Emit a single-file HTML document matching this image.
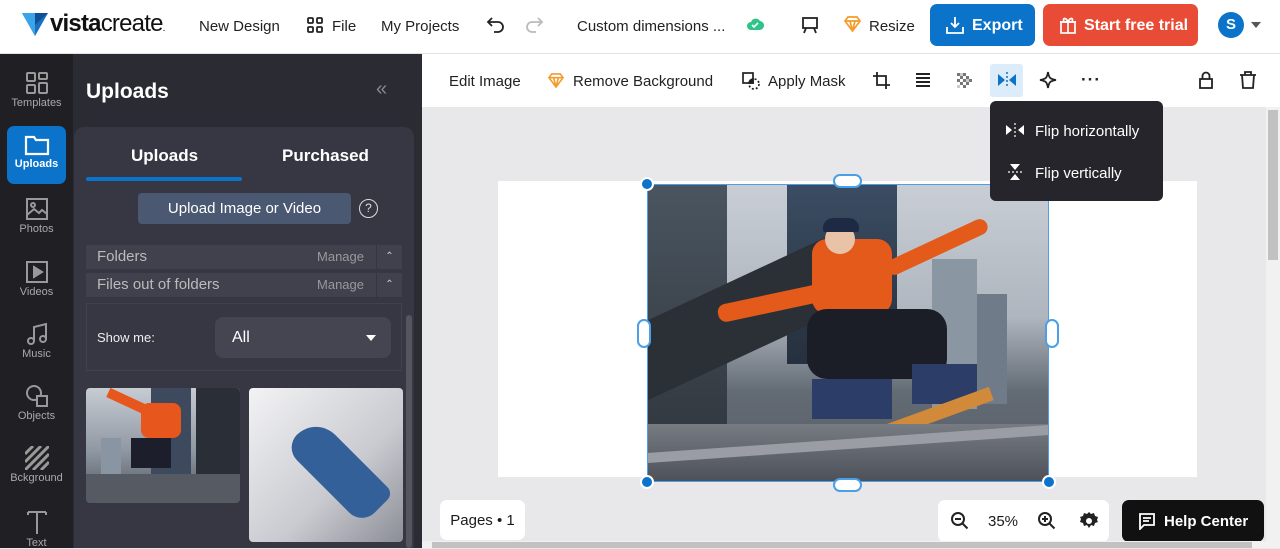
<!DOCTYPE html>
<html><head><meta charset="utf-8"><style>
*{box-sizing:border-box;margin:0;padding:0}
body{width:1280px;height:548px;overflow:hidden;font-family:"Liberation Sans",sans-serif;background:#e8e8ea;position:relative;color:#1a1a1a}
.abs{position:absolute}
.top{left:0;top:0;width:1280px;height:54px;background:#fff;border-bottom:1px solid #e2e2e2}
.t{position:absolute;font-size:15px;top:17px;color:#222}
.side{left:0;top:54px;width:73px;height:494px;background:#1f1f24}
.si{position:absolute;left:0;width:73px;text-align:center;color:#aaa;font-size:11px}
.si svg{display:block;margin:0 auto 2px}
.panel{left:73px;top:54px;width:349px;height:494px;background:#2b2b33}
.card{left:74px;top:127px;width:340px;height:421px;background:#373743;border-radius:10px 10px 0 0}
.tb{left:422px;top:54px;width:858px;height:53px;background:#fff}
.tbt{position:absolute;top:73px;font-size:15px;color:#222}
.row{position:absolute;left:86px;width:316px;height:24px;background:#41414d;color:#bbb;font-size:15px;line-height:24px;padding-left:11px}
.row .m{position:absolute;right:38px;top:0;font-size:13px;color:#999}
.row .c{position:absolute;right:0;top:0;width:26px;height:24px;border-left:1px solid #353540;color:#ccc;font-size:10px;text-align:center}
</style></head><body>
<div class="abs top"></div>
<svg class="abs" style="left:22px;top:13px" width="26" height="23" viewBox="0 0 26 23"><path d="M0 0h26L13 23z" fill="#1b6fc0"/><path d="M0 0h13v23z" fill="#3aa4e8"/><path d="M13 0h13L13 12z" fill="#0f4f96"/></svg>
<div class="abs" style="left:50px;top:10px;font-size:24px;letter-spacing:-0.8px;color:#111"><b>vista</b>create<span style="font-size:10px">.</span></div>
<div class="t" style="left:199px;top:18px">New Design</div>
<svg class="abs" style="left:307px;top:17px" width="16" height="16" viewBox="0 0 16 16" fill="none" stroke="#222" stroke-width="1.8"><rect x="1" y="1" width="5" height="5" rx="1"/><rect x="10" y="1" width="5" height="5" rx="1"/><rect x="1" y="10" width="5" height="5" rx="1"/><rect x="10" y="10" width="5" height="5" rx="1"/></svg>
<div class="t" style="left:332px;top:18px">File</div>
<div class="t" style="left:381px;top:18px">My Projects</div>
<svg class="abs" style="left:486px;top:16px" width="20" height="18" viewBox="0 0 20 18" fill="none" stroke="#222" stroke-width="1.8"><path d="M6 2L2 6l4 4M2 6h10a5 5 0 010 10H8"/></svg>
<svg class="abs" style="left:524px;top:16px" width="20" height="18" viewBox="0 0 20 18" fill="none" stroke="#bbb" stroke-width="1.8"><path d="M14 2l4 4-4 4M18 6H8a5 5 0 000 10h4"/></svg>
<div class="t" style="left:577px;top:18px">Custom dimensions ...</div>
<svg class="abs" style="left:746px;top:17px" width="18" height="14" viewBox="0 0 18 14"><path d="M5 13a4 4 0 010-8 5 5 0 019-1 4 4 0 01-1 9z" fill="#2ec48c"/><path d="M6 8l2 2 4-4" stroke="#fff" stroke-width="1.6" fill="none"/></svg>
<svg class="abs" style="left:801px;top:16px" width="18" height="18" viewBox="0 0 18 18" fill="none" stroke="#222" stroke-width="1.8"><rect x="2" y="2" width="14" height="10"/><path d="M5 12l-2 5M13 12l2 5"/></svg>
<svg class="abs" style="left:844px;top:16px" width="17" height="16" viewBox="0 0 17 16" fill="none" stroke="#f39c2a" stroke-width="1.7"><path d="M4 1h9l3 4-7.5 10L1 5z M1 5h15 M6 5l2.5 10L11 5"/></svg>
<div class="t" style="left:869px;top:18px">Resize</div>
<div class="abs" style="left:930px;top:4px;width:105px;height:42px;background:#0b73c9;border-radius:7px;color:#fff;font-size:16px;font-weight:bold;line-height:43px;padding-left:42px">Export</div>
<svg class="abs" style="left:946px;top:16px" width="18" height="18" viewBox="0 0 18 18" fill="none" stroke="#fff" stroke-width="1.8"><path d="M9 1v10M5 7l4 4 4-4M1 11v6h16v-6"/></svg>
<div class="abs" style="left:1043px;top:4px;width:155px;height:42px;background:#e94c36;border-radius:7px;color:#fff;font-size:16px;font-weight:bold;line-height:43px;padding-left:41px">Start free trial</div>
<svg class="abs" style="left:1059px;top:16px" width="18" height="18" viewBox="0 0 18 18" fill="none" stroke="#fff" stroke-width="1.7"><rect x="2" y="6" width="14" height="11"/><path d="M1 6h16M9 6v11M9 6C7 1 3 2 5 5M9 6c2-5 6-4 4-1"/></svg>
<div class="abs" style="left:1218px;top:12px;width:26px;height:26px;border-radius:50%;background:#0b73c9;color:#fff;font-weight:bold;font-size:15px;text-align:center;line-height:26px">S</div>
<div class="abs" style="left:1251px;top:22px;border:5px solid transparent;border-top:6px solid #555"></div>

<div class="abs side"></div>
<div class="abs panel"></div>
<div class="si" style="top:71px"><svg width="24" height="24" viewBox="0 0 24 24" fill="none" stroke="#999" stroke-width="2"><rect x="2" y="2" width="8" height="8" rx="1"/><rect x="14" y="2" width="8" height="6" rx="1"/><rect x="2" y="14" width="8" height="8" rx="1"/><rect x="14" y="12" width="8" height="10" rx="1"/></svg>Templates</div>
<div class="abs" style="left:7px;top:126px;width:59px;height:58px;background:#0b73c9;border-radius:7px"></div>
<div class="si" style="top:134px;color:#fff;font-weight:bold"><svg width="26" height="22" viewBox="0 0 26 22" fill="none" stroke="#fff" stroke-width="2.2"><path d="M2 3h8l2 3h12v14H2z"/></svg>Uploads</div>
<div class="si" style="top:197px"><svg width="24" height="24" viewBox="0 0 24 24" fill="none" stroke="#999" stroke-width="2"><rect x="2" y="2" width="20" height="20"/><circle cx="8" cy="8" r="2"/><path d="M2 18l7-6 5 4 3-3 5 4"/></svg>Photos</div>
<div class="si" style="top:260px"><svg width="24" height="24" viewBox="0 0 24 24" fill="none" stroke="#999" stroke-width="2"><rect x="2" y="2" width="20" height="20"/><path d="M9 7v10l8-5z" fill="#999"/></svg>Videos</div>
<div class="si" style="top:322px"><svg width="24" height="24" viewBox="0 0 24 24" fill="none" stroke="#999" stroke-width="2"><circle cx="6" cy="19" r="3"/><circle cx="18" cy="17" r="3"/><path d="M9 19V5l12-3v15"/></svg>Music</div>
<div class="si" style="top:384px"><svg width="24" height="24" viewBox="0 0 24 24" fill="none" stroke="#999" stroke-width="2"><circle cx="9" cy="9" r="7"/><rect x="12" y="12" width="10" height="10" fill="#1f1f24"/></svg>Objects</div>
<div class="si" style="top:446px"><svg width="24" height="24" viewBox="0 0 24 24" stroke="#999" stroke-width="3"><path d="M0 8L8 0M0 16L16 0M0 24L24 0M8 24L24 8M16 24l8-8"/></svg>Bckground</div>
<div class="si" style="top:509px"><svg width="24" height="26" viewBox="0 0 24 26" fill="none" stroke="#999" stroke-width="2"><path d="M3 3h18M12 3v22M3 3v3M21 3v3"/></svg>Text</div>

<div class="abs" style="left:86px;top:80px;color:#fff;font-size:21px;font-weight:bold">Uploads</div>
<div class="abs" style="left:376px;top:78px;color:#888;font-size:20px">&laquo;</div>
<div class="abs card"></div>
<div class="abs" style="left:131px;top:146px;color:#fff;font-size:17px;font-weight:bold">Uploads</div>
<div class="abs" style="left:282px;top:146px;color:#fff;font-size:17px;font-weight:bold">Purchased</div>
<div class="abs" style="left:86px;top:177px;width:156px;height:4px;background:#0b73c9;border-radius:2px"></div>
<div class="abs" style="left:138px;top:193px;width:213px;height:31px;background:#4b5871;border-radius:4px;color:#fff;font-size:15px;text-align:center;line-height:31px">Upload Image or Video</div>
<div class="abs" style="left:359px;top:199px;width:19px;height:19px;border:1.5px solid #ddd;border-radius:50%;color:#ddd;font-size:12px;text-align:center;line-height:16px">?</div>
<div class="row" style="top:245px">Folders<span class="m">Manage</span><span class="c">&#8963;</span></div>
<div class="row" style="top:273px">Files out of folders<span class="m">Manage</span><span class="c">&#8963;</span></div>
<div class="abs" style="left:86px;top:303px;width:316px;height:68px;border:1px solid #42424e"></div>
<div class="abs" style="left:97px;top:330px;color:#eee;font-size:13px">Show me:</div>
<div class="abs" style="left:215px;top:317px;width:176px;height:41px;background:#454552;border-radius:8px;color:#fff;font-size:16px;line-height:41px;padding-left:17px">All</div>
<div class="abs" style="left:366px;top:335px;border:5px solid transparent;border-top:6px solid #fff"></div>
<div class="abs" style="left:406px;top:315px;width:6px;height:233px;background:#555560;border-radius:3px"></div>
<!-- thumbs -->
<div class="abs" style="left:86px;top:388px;width:154px;height:115px;border-radius:4px;overflow:hidden;background:linear-gradient(#c7ccd3,#8f97a2 55%,#4d535c)">
<div class="abs" style="left:65px;top:0;width:40px;height:90px;background:#3d4a5e"></div><div class="abs" style="left:110px;top:0;width:44px;height:115px;background:#2a2f37"></div><div class="abs" style="left:15px;top:50px;width:20px;height:50px;background:#8a95a4"></div><div class="abs" style="left:55px;top:15px;width:40px;height:35px;background:#e7561c;border-radius:8px"></div><div class="abs" style="left:20px;top:10px;width:50px;height:10px;background:#e7561c;transform:rotate(25deg)"></div><div class="abs" style="left:45px;top:50px;width:40px;height:30px;background:#1c1f2b"></div><div class="abs" style="left:0;top:86px;width:154px;height:29px;background:#565a63"></div></div>
<div class="abs" style="left:249px;top:388px;width:154px;height:154px;border-radius:4px;overflow:hidden;background:linear-gradient(135deg,#f3f3f5,#c9cad0 60%,#8c8e96)">
<div class="abs" style="left:35px;top:60px;width:110px;height:45px;background:#34609a;border-radius:30px 10px 20px 20px;transform:rotate(45deg)"></div></div>

<!-- toolbar -->
<div class="abs tb"></div>
<div class="tbt" style="left:449px">Edit Image</div>
<svg class="abs" style="left:548px;top:73px" width="16" height="15" viewBox="0 0 17 16" fill="none" stroke="#f39c2a" stroke-width="1.7"><path d="M4 1h9l3 4-7.5 10L1 5z M1 5h15 M6 5l2.5 10L11 5"/></svg>
<div class="tbt" style="left:573px">Remove Background</div>
<svg class="abs" style="left:742px;top:72px" width="18" height="18" viewBox="0 0 18 18" fill="none" stroke="#222" stroke-width="1.7"><rect x="1" y="1" width="10" height="10"/><circle cx="12" cy="12" r="5" stroke-dasharray="2 2"/><path d="M7 11a5 5 0 014-4v4z" fill="#222"/></svg>
<div class="tbt" style="left:768px">Apply Mask</div>
<svg class="abs" style="left:873px;top:72px" width="17" height="17" viewBox="0 0 17 17" fill="none" stroke="#222" stroke-width="1.8"><path d="M4 0v13h13M0 4h13v13"/></svg>
<svg class="abs" style="left:916px;top:72px" width="14" height="16" viewBox="0 0 14 16" stroke="#222" stroke-width="2"><path d="M0 2h14M0 6h14M0 10h14M0 14h14"/></svg>
<svg class="abs" style="left:957px;top:73px" width="15" height="15" viewBox="0 0 15 15"><path d="M0 0h3v3H0zM6 0h3v3H6zM3 3h3v3H3zM9 3h3v3H9zM0 6h3v3H0zM6 6h3v3H6zM12 6h3v3h-3zM3 9h3v3H3zM9 9h3v3H9zM6 12h3v3H6z" fill="#777"/><path d="M3 0h3v3H3zM9 6h3v3H9zM0 12h3v3H0z" fill="#ccc"/></svg>
<div class="abs" style="left:990px;top:64px;width:33px;height:33px;background:#dcecfa;border-radius:3px"></div>
<svg class="abs" style="left:997px;top:72px" width="20" height="16" viewBox="0 0 20 16"><path d="M1 2l7 6-7 6zM19 2l-7 6 7 6z" fill="#0b73c9"/><path d="M10 0v16" stroke="#0b73c9" stroke-width="1.5" stroke-dasharray="2 2"/></svg>
<svg class="abs" style="left:1039px;top:71px" width="18" height="18" viewBox="0 0 18 18" fill="none" stroke="#222" stroke-width="1.8"><path d="M9 1C10 7 11 8 17 9 11 10 10 11 9 17 8 11 7 10 1 9 7 8 8 7 9 1z"/></svg>
<div class="abs" style="left:1081px;top:70px;font-size:17px;font-weight:bold;color:#222;letter-spacing:1px">···</div>
<svg class="abs" style="left:1199px;top:71px" width="14" height="18" viewBox="0 0 14 18" fill="none" stroke="#222" stroke-width="1.8"><rect x="1" y="8" width="12" height="9"/><path d="M3.5 8V5a3.5 3.5 0 017 0v3"/></svg>
<svg class="abs" style="left:1240px;top:71px" width="16" height="18" viewBox="0 0 16 18" fill="none" stroke="#222" stroke-width="1.8"><path d="M0 4h16M5 4V1h6v3M2 4l1 13h10l1-13"/></svg>

<!-- page -->
<div class="abs" style="left:498px;top:181px;width:699px;height:296px;background:#fff"></div>
<div class="abs" style="left:647px;top:184px;width:402px;height:298px;overflow:hidden;background:linear-gradient(#c9ced5,#aeb5be 45%,#626a74 70%,#5a5f67)">
<div class="abs" style="left:0;top:0;width:80px;height:298px;background:linear-gradient(#4a5560,#2e3339)"></div>
<div class="abs" style="left:140px;top:0;width:110px;height:180px;background:linear-gradient(#3b4d63,#26303e)"></div>
<div class="abs" style="left:285px;top:75px;width:45px;height:150px;background:#8b96a3"></div>
<div class="abs" style="left:330px;top:110px;width:30px;height:110px;background:#707b89"></div>
<div class="abs" style="left:0;top:90px;width:200px;height:80px;background:#2b3036;transform:skewY(-25deg)"></div>
<div class="abs" style="left:165px;top:55px;width:80px;height:75px;background:#e45a1b;border-radius:15px"></div>
<div class="abs" style="left:70px;top:110px;width:110px;height:18px;background:#e45a1b;transform:rotate(-12deg);border-radius:8px"></div>
<div class="abs" style="left:235px;top:55px;width:110px;height:16px;background:#e45a1b;transform:rotate(-25deg);border-radius:8px"></div>
<div class="abs" style="left:178px;top:40px;width:30px;height:30px;background:#e8c3a8;border-radius:50%"></div>
<div class="abs" style="left:176px;top:34px;width:36px;height:14px;background:#1e2a44;border-radius:10px 10px 2px 2px"></div>
<div class="abs" style="left:160px;top:125px;width:140px;height:70px;background:#1b1e27;border-radius:20px"></div>
<div class="abs" style="left:165px;top:195px;width:80px;height:40px;background:#2c3d68"></div>
<div class="abs" style="left:265px;top:180px;width:65px;height:40px;background:#2c3d68"></div>
<div class="abs" style="left:160px;top:235px;width:190px;height:14px;background:#d08a3a;transform:rotate(-20deg)"></div>
<div class="abs" style="left:0;top:240px;width:402px;height:58px;background:linear-gradient(#777b82,#4c5058)"></div>
<div class="abs" style="left:0;top:255px;width:402px;height:10px;background:#9a9ea4;transform:rotate(-4deg)"></div>
</div>
<div class="abs" style="left:647px;top:184px;width:402px;height:298px;border:1.5px solid #4a9fe6"></div>
<div class="abs" style="left:640px;top:177px;width:14px;height:14px;border-radius:50%;background:#0b73c9;border:2px solid #fff"></div>
<div class="abs" style="left:1042px;top:475px;width:14px;height:14px;border-radius:50%;background:#0b73c9;border:2px solid #fff"></div>
<div class="abs" style="left:640px;top:475px;width:14px;height:14px;border-radius:50%;background:#0b73c9;border:2px solid #fff"></div>
<div class="abs" style="left:833px;top:174px;width:29px;height:14px;border-radius:7px;background:#fff;border:2px solid #4a9fe6"></div>
<div class="abs" style="left:833px;top:478px;width:29px;height:14px;border-radius:7px;background:#fff;border:2px solid #4a9fe6"></div>
<div class="abs" style="left:637px;top:319px;width:14px;height:29px;border-radius:7px;background:#fff;border:2px solid #4a9fe6"></div>
<div class="abs" style="left:1045px;top:319px;width:14px;height:29px;border-radius:7px;background:#fff;border:2px solid #4a9fe6"></div>

<!-- dropdown -->
<div class="abs" style="left:990px;top:101px;width:173px;height:100px;background:#25252b;border-radius:6px"></div>
<svg class="abs" style="left:1005px;top:123px" width="20" height="14" viewBox="0 0 20 14"><path d="M1 2l6 5-6 5zM19 2l-6 5 6 5z" fill="#fff"/><path d="M10 0v14" stroke="#fff" stroke-width="1.2" stroke-dasharray="2 2"/></svg>
<div class="abs" style="left:1035px;top:123px;color:#fff;font-size:15px">Flip horizontally</div>
<svg class="abs" style="left:1008px;top:163px" width="14" height="18" viewBox="0 0 14 18"><path d="M2 1l5 6 5-6zM2 17l5-6 5 6z" fill="#fff"/><path d="M0 9h14" stroke="#fff" stroke-width="1.2" stroke-dasharray="2 2"/></svg>
<div class="abs" style="left:1035px;top:165px;color:#fff;font-size:15px">Flip vertically</div>

<!-- bottom -->
<div class="abs" style="left:440px;top:500px;width:85px;height:40px;background:#fff;border-radius:7px;font-size:15px;line-height:41px;text-align:center">Pages • 1</div>
<div class="abs" style="left:938px;top:500px;width:171px;height:42px;background:#fff;border-radius:7px"></div>
<svg class="abs" style="left:950px;top:511px" width="20" height="20" viewBox="0 0 20 20" fill="none" stroke="#222" stroke-width="2"><circle cx="8" cy="8" r="6"/><path d="M5 8h6M12.5 12.5l5 5"/></svg>
<div class="abs" style="left:988px;top:513px;font-size:15px">35%</div>
<svg class="abs" style="left:1037px;top:511px" width="20" height="20" viewBox="0 0 20 20" fill="none" stroke="#222" stroke-width="2"><circle cx="8" cy="8" r="6"/><path d="M5 8h6M8 5v6M12.5 12.5l5 5"/></svg>
<svg class="abs" style="left:1080px;top:512px" width="18" height="18" viewBox="0 0 18 18"><path d="M9 0l2 2 3-1 1 3 3 1-1 3 1 2-3 1-1 3-3-1-2 3-2-3-3 1-1-3-3-1 1-3-1-2 3-1 1-3 3 1z" fill="#222"/><circle cx="9" cy="9" r="3" fill="#fff"/></svg>
<div class="abs" style="left:1122px;top:500px;width:142px;height:42px;background:#111;border-radius:7px;color:#fff;font-size:15px;font-weight:bold;line-height:43px;padding-left:42px">Help Center</div>
<svg class="abs" style="left:1138px;top:512px" width="18" height="18" viewBox="0 0 18 18" fill="none" stroke="#fff" stroke-width="1.8"><path d="M2 2h14v11H6l-4 4z M5 6h8M5 9h6"/></svg>
<div class="abs" style="left:1266px;top:107px;width:14px;height:441px;background:#f1f1f1"></div>
<div class="abs" style="left:1268px;top:110px;width:10px;height:150px;background:#c1c1c1"></div>
<div class="abs" style="left:422px;top:541px;width:844px;height:7px;background:#f1f1f1"></div>
<div class="abs" style="left:432px;top:542px;width:820px;height:6px;background:#c1c1c1"></div>
</body></html>
